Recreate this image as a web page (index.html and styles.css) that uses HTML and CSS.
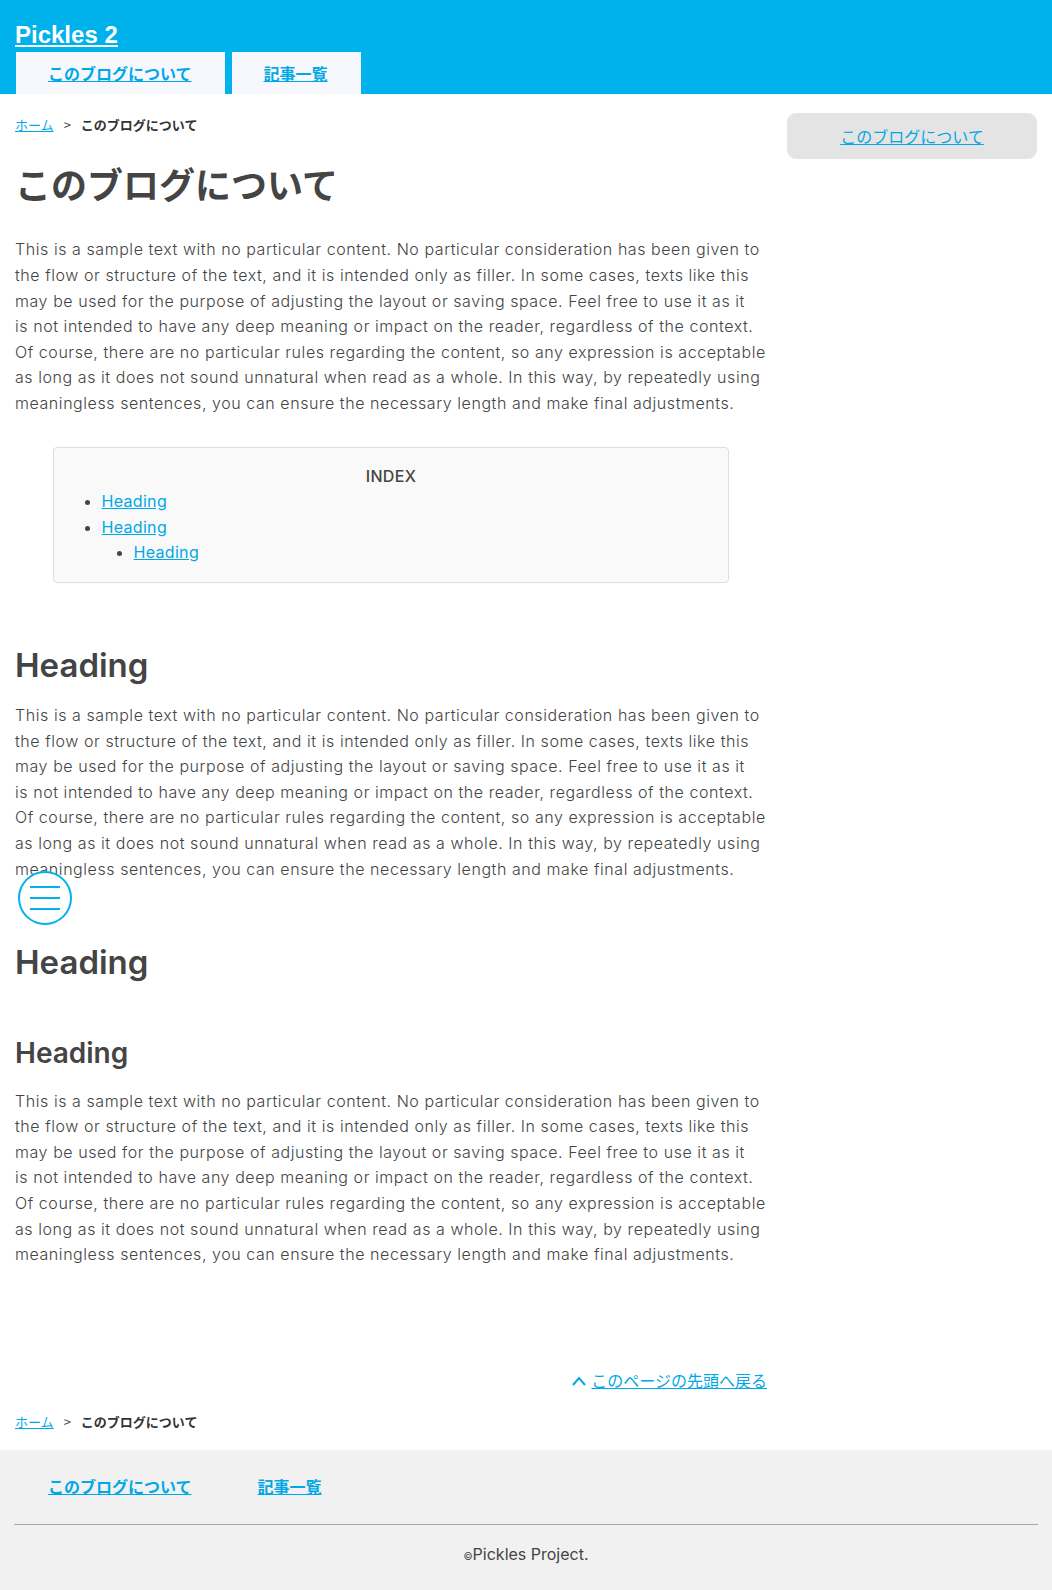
FILE: index.html
```html
<!DOCTYPE html>
<html lang="ja">
<head>
<meta charset="utf-8">
<title>このブログについて - Pickles 2</title>
<link rel="stylesheet" href="styles.css">
</head>
<body>
<header class="site-header">
  <div class="site-title"><a href="#">Pickles 2</a></div>
  <nav class="global-nav">
    <ul>
      <li><a href="#">このブログについて</a></li>
      <li><a href="#">記事一覧</a></li>
    </ul>
  </nav>
</header>

<div class="container">
  <main class="main">
    <div class="breadcrumb"><a href="#">ホーム</a><span class="sep">&gt;</span><strong>このブログについて</strong></div>
    <h1 class="page-title">このブログについて</h1>

    <p>This is a sample text with no particular content. No particular consideration has been given to<br>the flow or structure of the text, and it is intended only as filler. In some cases, texts like this<br>may be used for the purpose of adjusting the layout or saving space. Feel free to use it as it<br>is not intended to have any deep meaning or impact on the reader, regardless of the context.<br>Of course, there are no particular rules regarding the content, so any expression is acceptable<br>as long as it does not sound unnatural when read as a whole. In this way, by repeatedly using<br>meaningless sentences, you can ensure the necessary length and make final adjustments.</p>

    <div class="toc">
      <div class="toc-title">INDEX</div>
      <ul>
        <li><a href="#">Heading</a></li>
        <li><a href="#">Heading</a>
          <ul>
            <li><a href="#">Heading</a></li>
          </ul>
        </li>
      </ul>
    </div>

    <h2>Heading</h2>
    <p>This is a sample text with no particular content. No particular consideration has been given to<br>the flow or structure of the text, and it is intended only as filler. In some cases, texts like this<br>may be used for the purpose of adjusting the layout or saving space. Feel free to use it as it<br>is not intended to have any deep meaning or impact on the reader, regardless of the context.<br>Of course, there are no particular rules regarding the content, so any expression is acceptable<br>as long as it does not sound unnatural when read as a whole. In this way, by repeatedly using<br>meaningless sentences, you can ensure the necessary length and make final adjustments.</p>

    <h2 class="h2-after-text">Heading</h2>
    <h3>Heading</h3>
    <p>This is a sample text with no particular content. No particular consideration has been given to<br>the flow or structure of the text, and it is intended only as filler. In some cases, texts like this<br>may be used for the purpose of adjusting the layout or saving space. Feel free to use it as it<br>is not intended to have any deep meaning or impact on the reader, regardless of the context.<br>Of course, there are no particular rules regarding the content, so any expression is acceptable<br>as long as it does not sound unnatural when read as a whole. In this way, by repeatedly using<br>meaningless sentences, you can ensure the necessary length and make final adjustments.</p>

    <div class="pagetop">
      <a href="#"><svg class="chev" width="16" height="12" viewBox="0 0 16 12"><polyline points="2,10 8,3 14,10" fill="none" stroke="currentColor" stroke-width="2"/></svg><span>このページの先頭へ戻る</span></a>
    </div>
    <div class="breadcrumb breadcrumb-bottom"><a href="#">ホーム</a><span class="sep">&gt;</span><strong>このブログについて</strong></div>
  </main>

  <aside class="sidebar">
    <ul class="side-nav">
      <li><a href="#">このブログについて</a></li>
    </ul>
  </aside>
</div>

<footer class="site-footer">
  <ul class="footer-nav">
    <li><a href="#">このブログについて</a></li>
    <li><a href="#">記事一覧</a></li>
  </ul>
  <hr class="footer-rule">
  <div class="copyright"><small>&copy;</small>Pickles Project.</div>
</footer>

<button class="menu-button" type="button" aria-label="menu">
  <span></span><span></span><span></span>
</button>
</body>
</html>
```

FILE: styles.css
```css
html, body {
  margin: 0;
  padding: 0;
}
body {
  font-family: "Inter", "Noto Sans CJK JP", sans-serif;
  font-size: 16px;
  line-height: 1.6;
  color: #444;
  background: #fff;
}
a {
  color: #00a8e6;
}

/* header */
.site-header {
  background: #00b2ec;
  padding: 15px 15px 0;
}
.site-title {
  font-family: "Liberation Sans", "Noto Sans CJK JP", sans-serif;
  font-size: 24px;
  font-weight: bold;
  line-height: 39px;
  height: 37px;
}
.site-title a {
  color: #fff;
}
.global-nav ul {
  list-style: none;
  margin: 0;
  padding: 0 0 0 1px;
  display: flex;
  gap: 7px;
}
.global-nav a {
  display: block;
  height: 42px;
  line-height: 42px;
  padding: 0 33px 0 32px;
  background: #f6f8fe;
  font-weight: bold;
  font-family: "Noto Sans CJK JP", sans-serif;
}

/* layout */
.container {
  display: flex;
  gap: 20px;
  padding: 0 15px;
}
.main {
  width: 752px;
  flex: none;
}
.sidebar {
  flex: 1;
  padding-top: 19px;
}

.breadcrumb {
  font-family: "Noto Sans CJK JP", sans-serif;
  font-size: 13px;
  line-height: 20px;
  padding-top: 21px;
}
.breadcrumb .sep {
  margin: 0 10px;
}
.breadcrumb strong {
  color: #333;
}
.breadcrumb-bottom {
  padding-top: 18px;
  padding-bottom: 18px;
}

.page-title {
  font-family: "Noto Sans CJK JP", sans-serif;
  font-size: 36px;
  line-height: 1.4;
  margin: 23px 0 29px;
  color: #444;
}
p {
  margin: 0;
  font-weight: 300;
  letter-spacing: 0.56px;
  white-space: nowrap;
}

.toc {
  width: 90%;
  box-sizing: border-box;
  margin: 30px auto 0;
  background: #f9f9f9;
  border: 1px solid #dedede;
  border-radius: 4px;
  padding: 16px 24px;
}
.toc-title {
  text-align: center;
  font-weight: 500;
  letter-spacing: 0.3px;
}
.toc ul {
  margin: 0;
  padding-left: 24px;
  list-style: disc;
}
.toc ul ul {
  padding-left: 32px;
  list-style: disc;
}
.toc a {
  letter-spacing: 0.3px;
}

h2 {
  font-size: 33px;
  line-height: 1.4;
  font-weight: 600;
  margin: 59px 0 15px;
  color: #444;
}
h2.h2-after-text {
  margin-top: 57px;
}
h3 {
  font-size: 28px;
  line-height: 1.4;
  font-weight: 600;
  margin: 49px 0 15px;
  color: #444;
}

.pagetop {
  text-align: right;
  margin-top: 100px;
  font-family: "Noto Sans CJK JP", sans-serif;
}
.pagetop a {
  display: inline-flex;
  align-items: center;
  gap: 4px;
  text-decoration: none;
}
.pagetop .chev {
  display: block;
}
.pagetop span {
  text-decoration: underline;
}

/* sidebar */
.side-nav {
  list-style: none;
  margin: 0;
  padding: 0;
}
.side-nav a {
  display: block;
  height: 46px;
  line-height: 46px;
  text-align: center;
  background: #e4e4e4;
  border-radius: 9px;
  font-family: "Noto Sans CJK JP", sans-serif;
}

/* footer */
.site-footer {
  background: #f1f1f1;
  padding: 24px 15px 23px;
}
.footer-nav {
  list-style: none;
  margin: 0;
  padding: 0;
  display: flex;
}
.footer-nav a {
  display: block;
  padding: 0 33px;
  font-weight: bold;
  font-family: "Noto Sans CJK JP", sans-serif;
}
.footer-rule {
  border: 0;
  border-top: 1px solid #a8a8a8;
  margin: 25px -1px 17px;
}
.copyright {
  text-align: center;
  color: #444;
}
.copyright small {
  font-size: 10px;
}

/* floating menu button */
.menu-button {
  position: absolute;
  left: 18px;
  top: 871px;
  width: 54px;
  height: 54px;
  border-radius: 50%;
  border: 2px solid #00b2ec;
  background: #fff;
  padding: 0;
  display: flex;
  flex-direction: column;
  align-items: center;
  justify-content: center;
  gap: 9px;
}
.menu-button span {
  display: block;
  width: 30px;
  height: 2px;
  background: #00b2ec;
}
```
